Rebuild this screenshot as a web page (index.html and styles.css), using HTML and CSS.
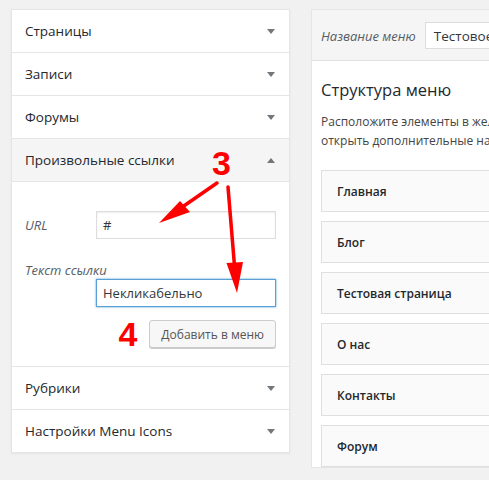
FILE: index.html
```html
<!DOCTYPE html>
<html lang="ru">
<head>
<meta charset="utf-8">
<title>Меню</title>
<link rel="stylesheet" href="styles.css">
</head>
<body>
<div class="page">
  <div class="accordion">
    <div class="sec-title"><span>Страницы</span><i class="tri down"></i></div>
    <div class="sec-title"><span>Записи</span><i class="tri down"></i></div>
    <div class="sec-title"><span>Форумы</span><i class="tri down"></i></div>
    <div class="sec-title open"><span>Произвольные ссылки</span><i class="tri up"></i></div>
    <div class="sec-body">
      <div class="field-row">
        <label class="lbl url-lbl">URL</label>
        <div class="inp">#</div>
      </div>
      <label class="lbl text-lbl">Текст ссылки</label>
      <div class="inp focus">Некликабельно</div>
      <div class="btn-row">
        <span class="num">4</span>
        <button class="btn">Добавить в меню</button>
      </div>
    </div>
    <div class="sec-title"><span>Рубрики</span><i class="tri down"></i></div>
    <div class="sec-title last"><span>Настройки Menu Icons</span><i class="tri down"></i></div>
  </div>

  <div class="menu-panel">
    <div class="menu-header">
      <span class="lbl">Название меню</span>
      <div class="inp name-inp">Тестовое меню</div>
    </div>
    <div class="menu-body">
      <h3 class="menu-title">Структура меню</h3>
      <p class="menu-desc">Расположите элементы в желаемом порядке перетаскиванием. Нажмите на стрелку справа от элемента, чтобы<br>открыть дополнительные настройки.</p>
      <ul class="items">
        <li>Главная</li>
        <li>Блог</li>
        <li>Тестовая страница</li>
        <li>О нас</li>
        <li>Контакты</li>
        <li>Форум</li>
      </ul>
    </div>
  </div>
</div>

<div class="num three">3</div>
<svg class="arrows" width="489" height="480" viewBox="0 0 489 480" aria-hidden="true">
  <line x1="217" y1="183" x2="178" y2="210" stroke="#ff0000" stroke-width="3.5" stroke-linecap="round"/>
  <polygon points="159,223 180,201 190,212" fill="#ff0000"/>
  <line x1="228" y1="187" x2="234.5" y2="266" stroke="#ff0000" stroke-width="3.5" stroke-linecap="round"/>
  <polygon points="237,293 226.5,263 243,262" fill="#ff0000"/>
</svg>
</body>
</html>
```
FILE: styles.css
```css
html, body {
  margin: 0;
  padding: 0;
  background: #f1f1f1;
  overflow: hidden;
  width: 489px;
  height: 480px;
  font-family: "Open Sans", "Noto Sans", sans-serif;
  color: #23282d;
}

.page {
  display: flex;
  align-items: flex-start;
  gap: 21px;
  padding: 9px 0 0 11px;
}

.accordion {
  width: 277px;
  flex: none;
  background: #fff;
  border: 1px solid #e5e5e5;
  box-shadow: 0 1px 2px rgba(0, 0, 0, 0.06);
}

.sec-title {
  height: 42px;
  border-bottom: 1px solid #e5e5e5;
  display: flex;
  align-items: center;
  justify-content: space-between;
  padding: 0 14px 0 13px;
  font-size: 13.5px;
  color: #23282d;
}
.sec-title.open { background: #f5f5f5; }
.sec-title.last { border-bottom: none; }

.tri {
  width: 0;
  height: 0;
  border-left: 4px solid transparent;
  border-right: 4px solid transparent;
}
.tri.down { border-top: 5px solid #72777c; }
.tri.up { border-bottom: 5px solid #72777c; }

.sec-body {
  padding: 29px 13px 18px 13px;
  border-bottom: 1px solid #e5e5e5;
  display: flex;
  flex-direction: column;
}

.field-row {
  display: flex;
  align-items: center;
}
.lbl {
  font-style: italic;
  font-size: 13px;
  color: #555d66;
}
.url-lbl { width: 71px; }
.text-lbl {
  margin-top: 22px;
  line-height: 18px;
}

.inp {
  box-sizing: border-box;
  width: 180px;
  height: 28px;
  border: 1px solid #ddd;
  background: #fff;
  box-shadow: inset 0 1px 2px rgba(0, 0, 0, 0.07);
  font-size: 13px;
  color: #32373c;
  padding: 0 6px;
  display: flex;
  align-items: center;
  white-space: nowrap;
  overflow: hidden;
}
.inp.focus {
  margin-left: 71px;
  border-color: #5b9dd9;
  box-shadow: 0 0 2px rgba(30, 140, 190, 0.8);
}

.btn-row {
  margin-top: 13px;
  display: flex;
  justify-content: flex-end;
  align-items: center;
  gap: 12px;
}
.btn {
  box-sizing: border-box;
  height: 28px;
  padding: 0 11px;
  border: 1px solid #ccc;
  border-radius: 3px;
  background: #f7f7f7;
  box-shadow: 0 1px 0 #ccc;
  color: #555;
  font-family: "Open Sans", "Noto Sans", sans-serif;
  font-size: 12px;
}

.num {
  font-family: "Liberation Sans", Arial, sans-serif;
  font-weight: bold;
  font-size: 34px;
  line-height: 28px;
  color: #ff0000;
}
.three {
  position: absolute;
  left: 212px;
  top: 149px;
}
.arrows {
  position: absolute;
  left: 0;
  top: 0;
  pointer-events: none;
}

.menu-panel {
  width: 420px;
  flex: none;
  background: #fff;
  border: 1px solid #e5e5e5;
}
.menu-header {
  background: #f5f5f5;
  border-bottom: 1px solid #dfdfdf;
  padding: 12px 9px 11px 9px;
  display: flex;
  align-items: center;
  gap: 9px;
}
.name-inp {
  width: 260px;
  height: 27px;
  padding: 0 8px;
  box-shadow: none;
  font-size: 13.5px;
}
.menu-body {
  padding: 0 9px;
}
.menu-title {
  margin: 16px 0 0;
  font-size: 16.5px;
  font-weight: 400;
  line-height: 26px;
  color: #23282d;
}
.menu-desc {
  margin: 9px 0 0;
  font-size: 12px;
  line-height: 19px;
  color: #444;
  white-space: nowrap;
}
.items {
  list-style: none;
  margin: 20px 0 0;
  padding: 0;
  display: flex;
  flex-direction: column;
  gap: 9px;
}
.items li {
  box-sizing: border-box;
  height: 42px;
  border: 1px solid #dfdfdf;
  background: #fafafa;
  padding-left: 15px;
  display: flex;
  align-items: center;
  font-size: 12px;
  font-weight: 600;
  color: #23282d;
}
```
